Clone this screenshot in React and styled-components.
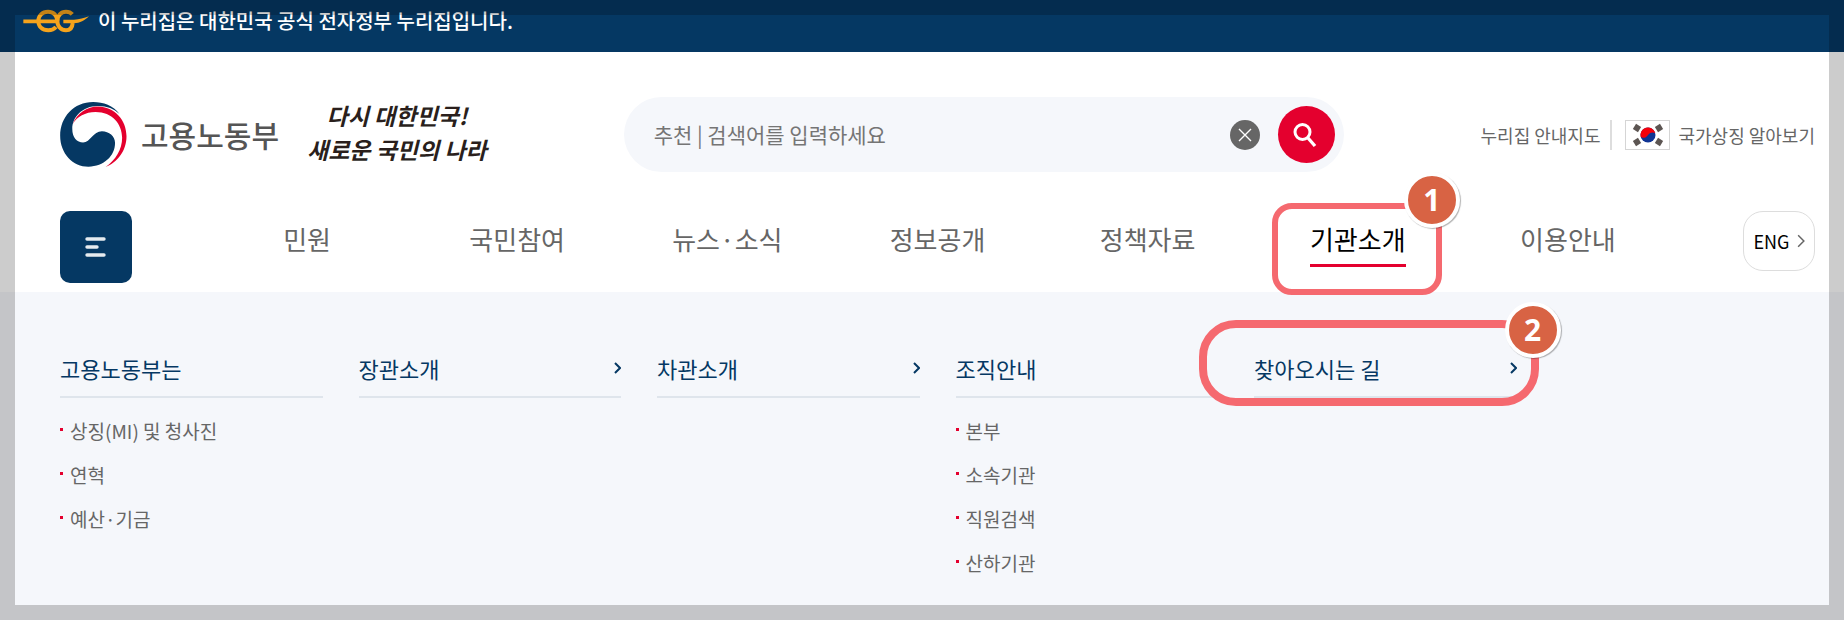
import React from 'react'
import styled, { createGlobalStyle } from 'styled-components'

const GlobalStyle = createGlobalStyle`
    * {
        box-sizing: border-box;
    }

    body {
        margin: 0;
        background: #ffffff;
        font-family: "Noto Sans CJK KR", "Noto Sans", sans-serif;
    }

    a {
        color: inherit;
        text-decoration: none;
    }

    button, input {
        font-family: inherit;
    }

    ul {
        margin: 0;
        padding: 0;
        list-style: none;
    }
`

const Page = styled.div`
    display: flex;
    flex-direction: column;
    min-height: 100vh;
`

const Frame = styled.div`
    position: fixed;
    inset: 0;
    border: 15px solid rgba(0, 0, 0, 0.2);
    pointer-events: none;
    z-index: 10;
`

const GovBar = styled.div`
    display: flex;
    align-items: center;
    gap: 8px;
    height: 52px;
    padding: 0 22px 10px;
    background: #053863;
    color: #ffffff;
    font-size: 20px;
    font-weight: 500;
    line-height: 30px;
`

const Header = styled.header`
    display: flex;
    flex-direction: column;
    gap: 39px;
    padding: 45px 29px 9px 60px;
`

const TopRow = styled.div`
    display: flex;
    align-items: center;
    justify-content: space-between;
    height: 75px;
`

const Brand = styled.div`
    display: flex;
    align-items: center;
    gap: 28px;
`

const MinistryLink = styled.a`
    display: flex;
    align-items: center;
    gap: 14px;
    color: #555555;
    font-size: 30px;
    font-weight: 500;
    line-height: 36px;
`

const MinistryName = styled.span`
    padding-bottom: 2px;
`

const Slogan = styled.p`
    margin: 0;
    padding-bottom: 6px;
    color: #2a1f1c;
    font-size: 23px;
    font-style: italic;
    font-weight: 700;
    line-height: 34px;
    text-align: center;
    white-space: nowrap;
`

const SearchForm = styled.form`
    display: flex;
    align-items: center;
    flex: 0 1 720px;
    height: 75px;
    padding: 0 9px 0 30px;
    border-radius: 38px;
    background: #f5f7fb;
`

const SearchInput = styled.input`
    flex: 1;
    min-width: 0;
    padding: 0 0 2px;
    border: none;
    outline: none;
    background: transparent;
    color: #222222;
    font-size: 21px;

    &::placeholder {
        color: #757575;
        opacity: 1;
    }
`

const RoundButton = styled.button`
    display: flex;
    align-items: center;
    justify-content: center;
    flex: none;
    width: ${props => props.$size}px;
    height: ${props => props.$size}px;
    margin-left: 18px;
    padding: 0;
    border: none;
    border-radius: 50%;
    background: ${props => props.$color};
    cursor: pointer;
`

const UtilLinks = styled.div`
    display: flex;
    align-items: center;
    color: #666666;
    font-size: 18px;
    line-height: 30px;
    white-space: nowrap;
`

const SiteMapLink = styled.a`
    padding-right: 10px;
    border-right: 2px solid #dddddd;
`

const SymbolLink = styled.a`
    display: flex;
    align-items: center;
    gap: 8px;
    margin-left: 13px;
`

const FlagBox = styled.span`
    display: flex;
    align-items: center;
    justify-content: center;
    width: 45px;
    height: 30px;
    border: 1px solid #d5d5d5;
    background: #ffffff;
`

const NavRow = styled.div`
    display: flex;
    align-items: flex-start;
    gap: 70px;
`

const MenuButton = styled.button`
    display: flex;
    align-items: center;
    justify-content: center;
    flex: none;
    width: 72px;
    height: 72px;
    padding: 0;
    border: none;
    border-radius: 10px;
    background: #053863;
    cursor: pointer;
`

const NavList = styled.ul`
    display: grid;
    grid-template-columns: repeat(7, 1fr);
    flex: 1;
    padding-top: 8px;
`

const NavItem = styled.li`
    display: flex;
    justify-content: center;
    position: relative;
`

const NavLink = styled.a`
    padding-bottom: 5px;
    border-bottom: 3px solid ${props => (props.$active ? '#e4002e' : 'transparent')};
    color: ${props => (props.$active ? '#000000' : '#666666')};
    font-size: 26px;
    line-height: 40px;
    white-space: nowrap;
`

const LangButton = styled.button`
    display: flex;
    align-items: center;
    justify-content: center;
    gap: 7px;
    flex: none;
    width: 72px;
    height: 60px;
    padding: 0;
    border: 1px solid #dddddd;
    border-radius: 20px;
    background: #ffffff;
    color: #000000;
    font-size: 18px;
    cursor: pointer;
`

const SubMenu = styled.nav`
    display: grid;
    grid-template-columns: repeat(6, 1fr);
    align-items: start;
    gap: 36px;
    flex: 1;
    padding: 52px 29px 34px 60px;
    background: #f5f7fb;
`

const SubColumn = styled.div`
    position: relative;
`

const SubTitle = styled.a`
    display: flex;
    align-items: center;
    justify-content: space-between;
    height: 54px;
    padding-bottom: 4px;
    border-bottom: 2px solid #dfe5ec;
    color: #053863;
    font-size: 22px;
`

const SubList = styled.ul`
    padding-top: 10px;
`

const SubItem = styled.li`
    display: flex;
    align-items: center;
    gap: 7px;
    height: 44px;
    color: #666666;
    font-size: 19px;

    &::before {
        content: "";
        width: 3px;
        height: 3px;
        margin-bottom: 2px;
        background: #e4002e;
    }
`

const NavMark = styled.span`
    position: absolute;
    top: -16px;
    left: 50%;
    width: 170px;
    height: 92px;
    margin-left: -86px;
    border: 6px solid #f5696f;
    border-radius: 20px;
    pointer-events: none;
`

const SubMark = styled.span`
    position: absolute;
    top: -24px;
    left: -55px;
    right: -22px;
    height: 86px;
    border: 8px solid #f5696f;
    border-radius: 37px;
    pointer-events: none;
`

const MarkNumber = styled.span`
    position: absolute;
    top: ${props => props.$top}px;
    right: ${props => props.$right}px;
    width: 56px;
    height: 56px;
    border: 4px solid #ffffff;
    border-radius: 50%;
    background: #d86344;
    box-shadow: 1px 1px 1px rgba(0, 0, 0, 0.3);
    color: #ffffff;
    font-family: "Noto Sans", sans-serif;
    font-size: 30px;
    font-weight: 700;
    line-height: 48px;
    text-align: center;
`

const navItems = ['민원', '국민참여', '뉴스·소식', '정보공개', '정책자료', '기관소개', '이용안내']

const subMenus = [
  { title: '고용노동부는', items: ['상징(MI) 및 청사진', '연혁', '예산·기금'] },
  { title: '장관소개', items: [] },
  { title: '차관소개', items: [] },
  { title: '조직안내', items: ['본부', '소속기관', '직원검색', '산하기관'] },
  { title: '찾아오시는 길', items: [], marked: true },
]

const EgovLogo = () => (
  <svg width="68" height="24" viewBox="0 0 200 72" fill="none" stroke="#f5a31c" strokeWidth="12" aria-hidden="true">
    <path d="M2 37H102" strokeWidth="11" />
    <path d="M104 37C103 17 91 8 76 8C59 8 47 20 47 36C47 52 58 64 77 64C87 64 94 61 100 54" />
    <path d="M149 16C144 10 138 8 130 8C115 8 104 20 104 36C104 52 115 64 130 64C142 64 149 56 150 42" />
    <path d="M122 32H154C170 32 184 27 199 22C186 34 172 43 154 43H122Z" fill="#f5a31c" stroke="none" />
  </svg>
)

const MinistryLogo = () => (
  <svg width="67" height="65" viewBox="0 0 198 193" aria-hidden="true">
    <path fill="#053863" d="M176 36C158 10 128 0 98 0C40 0 0 45 0 100C0 153 38 192 84 192C130 192 163 160 163 122C163 102 145 87 124 87C98 87 90 120 68 120C50 120 36 105 36 80C36 45 66 12 112 12C140 12 160 20 176 36Z" />
    <path fill="#e4002e" d="M37 66C50 32 80 13 112 13C162 15 197 52 197 102C197 145 170 180 135 193C165 172 184 140 184 106C184 66 155 30 105 30C75 30 50 44 37 66Z" />
  </svg>
)

const FlagIcon = () => (
  <svg width="32" height="24" viewBox="0 0 32 24" aria-hidden="true">
    <circle cx="16" cy="12" r="7.5" fill="#0f3494" />
    <path d="M8.7 14A7.5 7.5 0 1 1 23.3 10C21 9 18 9 16 12C14 15 11 15.5 8.7 14Z" fill="#f5000b" />
    <g fill="#5c5552">
      <rect x="2" y="2" width="6" height="6" transform="rotate(32 5 5)" />
      <rect x="24" y="2" width="6" height="6" transform="rotate(-32 27 5)" />
      <rect x="2" y="16" width="6" height="6" transform="rotate(-32 5 19)" />
      <rect x="24" y="16" width="6" height="6" transform="rotate(32 27 19)" />
    </g>
  </svg>
)

const CloseIcon = () => (
  <svg width="14" height="14" viewBox="0 0 14 14" stroke="#ffffff" strokeWidth="1.4" aria-hidden="true">
    <path d="M1 1L13 13M13 1L1 13" />
  </svg>
)

const SearchIcon = () => (
  <svg width="26" height="26" viewBox="0 0 26 26" fill="none" stroke="#ffffff" aria-hidden="true">
    <circle cx="9.5" cy="10" r="7.5" strokeWidth="3" />
    <path d="M15 16L22 24" strokeWidth="3.4" />
  </svg>
)

const MenuIcon = () => (
  <svg width="22" height="24" viewBox="0 0 22 24" stroke="#e6ebf0" strokeWidth="3.4" strokeLinecap="round" aria-hidden="true">
    <path d="M2 4H19M2 12H12M2 20H19" />
  </svg>
)

const ArrowIcon = ({ size, color, stroke }) => (
  <svg width={size / 2 + 1} height={size} viewBox="0 0 7 12" fill="none" stroke={color} strokeWidth={stroke} aria-hidden="true">
    <path d="M1 1L6 6L1 11" />
  </svg>
)

const App = () => {
  const [keyword, setKeyword] = React.useState('')

  const handleKeyword = (event) => {
    setKeyword(event.target.value)
  }

  const handleSubmit = (event) => {
    event.preventDefault()
  }

  return (
    <Page>
      <GlobalStyle />
      <GovBar>
        <EgovLogo />
        <span>이 누리집은 대한민국 공식 전자정부 누리집입니다.</span>
      </GovBar>
      <Header>
        <TopRow>
          <Brand>
            <MinistryLink href="#">
              <MinistryLogo />
              <MinistryName>고용노동부</MinistryName>
            </MinistryLink>
            <Slogan>다시 대한민국!<br />새로운 국민의 나라</Slogan>
          </Brand>
          <SearchForm onSubmit={handleSubmit}>
            <SearchInput
              aria-label="검색어"
              value={keyword}
              onChange={handleKeyword}
              placeholder="추천 | 검색어를 입력하세요"
            />
            <RoundButton type="button" $size={30} $color="#666666" aria-label="지우기" onClick={() => setKeyword('')}>
              <CloseIcon />
            </RoundButton>
            <RoundButton type="submit" $size={57} $color="#e4002e" aria-label="검색">
              <SearchIcon />
            </RoundButton>
          </SearchForm>
          <UtilLinks>
            <SiteMapLink href="#">누리집 안내지도</SiteMapLink>
            <SymbolLink href="#">
              <FlagBox><FlagIcon /></FlagBox>
              <span>국가상징 알아보기</span>
            </SymbolLink>
          </UtilLinks>
        </TopRow>
        <NavRow>
          <MenuButton type="button" aria-label="전체메뉴">
            <MenuIcon />
          </MenuButton>
          <NavList>
            {navItems.map(name => (
              <NavItem key={name}>
                <NavLink href="#" $active={name === '기관소개'}>{name}</NavLink>
                {name === '기관소개' && (
                  <NavMark>
                    <MarkNumber $top={-37} $right={-24}>1</MarkNumber>
                  </NavMark>
                )}
              </NavItem>
            ))}
          </NavList>
          <LangButton type="button">
            ENG
            <ArrowIcon size={14} color="#666666" stroke={1.3} />
          </LangButton>
        </NavRow>
      </Header>
      <SubMenu>
        {subMenus.map(menu => (
          <SubColumn key={menu.title}>
            <SubTitle href="#">
              {menu.title}
              {menu.items.length === 0 && <ArrowIcon size={12} color="#053863" stroke={2} />}
            </SubTitle>
            {menu.items.length > 0 && (
              <SubList>
                {menu.items.map(item => (
                  <SubItem key={item}><a href="#">{item}</a></SubItem>
                ))}
              </SubList>
            )}
            {menu.marked && (
              <SubMark>
                <MarkNumber $top={-26} $right={-30}>2</MarkNumber>
              </SubMark>
            )}
          </SubColumn>
        ))}
      </SubMenu>
      <Frame />
    </Page>
  )
}

export default App
